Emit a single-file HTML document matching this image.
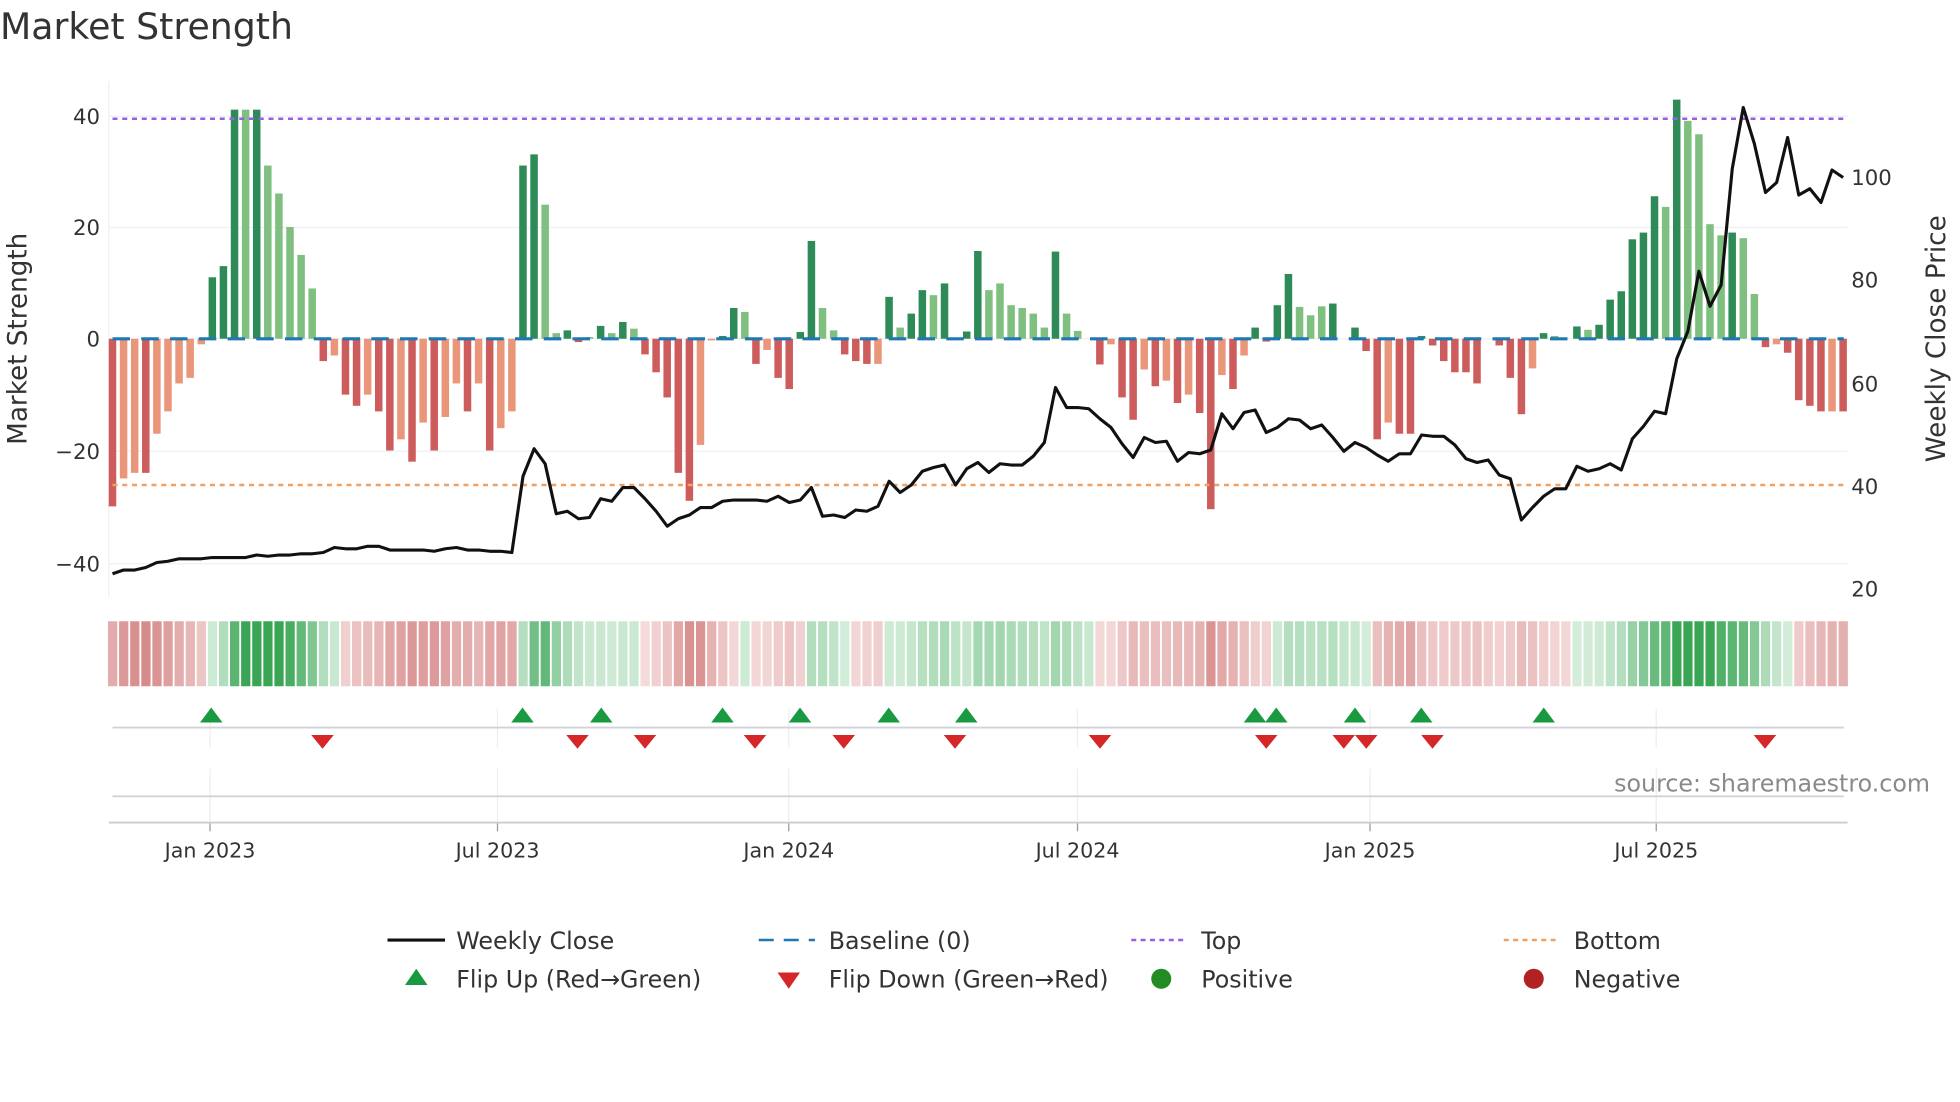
<!DOCTYPE html>
<html><head><meta charset="utf-8"><style>
html,body{margin:0;padding:0;background:#fff;}
svg{display:block;font-family:"DejaVu Sans","Liberation Sans",sans-serif;}
</style></head><body>
<svg id="s" width="1960" height="1102" viewBox="0 0 1568 881.6" xmlns="http://www.w3.org/2000/svg">
<rect width="1568" height="881.6" fill="#fff"/>
<text x="0" y="31" font-size="29" fill="#333">Market Strength</text>
<g id="grid"></g>
<g id="bars"></g>
<g id="over"></g>
<text x="1544" y="633" font-size="19" fill="#8a8a8a" text-anchor="end">source: sharemaestro.com</text>
<g font-size="17" fill="#333" text-anchor="end">
<text x="80" y="99">40</text><text x="80" y="188">20</text><text x="80" y="277">0</text><text x="80" y="367">−20</text><text x="80" y="457">−40</text>
</g>
<g font-size="17" fill="#333">
<text x="1481" y="148">100</text><text x="1481" y="230">80</text><text x="1481" y="313">60</text><text x="1481" y="395">40</text><text x="1481" y="477">20</text>
</g>
<text transform="translate(21,271) rotate(-90)" font-size="21" fill="#333" text-anchor="middle">Market Strength</text>
<text transform="translate(1556,271) rotate(-90)" font-size="21" fill="#333" text-anchor="middle">Weekly Close Price</text>
<g font-size="16.5" fill="#333" text-anchor="middle">
<text x="168" y="686">Jan 2023</text><text x="398" y="686">Jul 2023</text><text x="631" y="686">Jan 2024</text><text x="862" y="686">Jul 2024</text><text x="1096" y="686">Jan 2025</text><text x="1325" y="686">Jul 2025</text>
</g>
<g font-size="19" fill="#333">
<line x1="310" y1="752" x2="356" y2="752" stroke="#111" stroke-width="2.5"/><text x="365" y="759">Weekly Close</text>
<line x1="607" y1="752" x2="652" y2="752" stroke="#1f77b4" stroke-width="2" stroke-dasharray="12,8"/><text x="663" y="759">Baseline (0)</text>
<line x1="905" y1="752" x2="950" y2="752" stroke="#9b5de5" stroke-width="2" stroke-dasharray="4,3.5"/><text x="961" y="759">Top</text>
<line x1="1203" y1="752" x2="1248" y2="752" stroke="#f0a060" stroke-width="2" stroke-dasharray="4,3.5"/><text x="1259" y="759">Bottom</text>
<polygon points="324,788 342,788 333,775" fill="#1a9a40"/><text x="365" y="790">Flip Up (Red→Green)</text>
<polygon points="622,778 640,778 631,791" fill="#d62728"/><text x="663" y="790">Flip Down (Green→Red)</text>
<circle cx="929" cy="783" r="8" fill="#228b22"/><text x="961" y="790">Positive</text>
<circle cx="1227" cy="783" r="8" fill="#b22222"/><text x="1259" y="790">Negative</text>
</g>
</svg>
<script>
var NS="http://www.w3.org/2000/svg";
function el(p,t,a){var e=document.createElementNS(NS,t);for(var k in a)e.setAttribute(k,a[k]);p.appendChild(e);return e;}
var g=document.getElementById('grid'),b=document.getElementById('bars'),o=document.getElementById('over');
[93,182,271,361,451].forEach(function(y){el(g,'line',{x1:87,x2:1478,y1:y,y2:y,stroke:'#eef0f2','stroke-width':1});});
el(g,'line',{x1:87,x2:87,y1:65,y2:478,stroke:'#eef0f2','stroke-width':1});
var ticks=[168,398,631,862,1096,1325];
ticks.forEach(function(x){el(g,'line',{x1:x,x2:x,y1:567,y2:598,stroke:'#eceef0'});el(g,'line',{x1:x,x2:x,y1:615,y2:657,stroke:'#eceef0'});el(g,'line',{x1:x,x2:x,y1:658,y2:665,stroke:'#999'});});
el(g,'line',{x1:90,x2:1475,y1:582,y2:582,stroke:'#d0d3d8','stroke-width':1.5});
el(g,'line',{x1:90,x2:1475,y1:637,y2:637,stroke:'#d0d3d8','stroke-width':1.5});
el(g,'line',{x1:87,x2:1478,y1:658,y2:658,stroke:'#ccc','stroke-width':1.5});
var V=[[-30,1],[-25,0],[-24,0],[-24,1],[-17,0],[-13,0],[-8,0],[-7,0],[-1,0],[11,1],[13,1],[41,1],[41,0],[41,1],[31,0],[26,0],[20,0],[15,0],[9,0],[-4,1],[-3,0],[-10,1],[-12,1],[-10,0],[-13,1],[-20,1],[-18,0],[-22,1],[-15,0],[-20,1],[-14,0],[-8,0],[-13,1],[-8,0],[-20,1],[-16,0],[-13,0],[31,1],[33,1],[24,0],[1,0],[1.5,1],[-0.6,1],[0.3,0],[2.3,1],[1,0],[3,1],[1.8,0],[-2.8,1],[-6,1],[-10.5,1],[-24,1],[-29,1],[-19,0],[-0.3,0],[0.5,1],[5.5,1],[4.8,0],[-4.5,1],[-2,0],[-7,1],[-9,1],[1.2,1],[17.5,1],[5.5,0],[1.5,0],[-2.8,1],[-4,1],[-4.5,1],[-4.5,0],[7.5,1],[2,0],[4.5,1],[8.7,1],[7.8,0],[9.9,1],[0,0],[1.3,1],[15.7,1],[8.7,0],[9.9,0],[6,0],[5.5,0],[4.5,0],[2,0],[15.6,1],[4.5,0],[1.4,0],[0,0],[-4.6,1],[-1,0],[-10.5,1],[-14.5,1],[-5.5,0],[-8.5,1],[-7.5,0],[-11.5,1],[-10,0],[-13.3,1],[-30.5,1],[-6.5,0],[-9,1],[-3,0],[2,1],[-0.5,1],[6,1],[11.6,1],[5.7,0],[4.2,0],[5.8,0],[6.3,1],[0,0],[2,1],[-2.2,1],[-18,1],[-15,0],[-17,1],[-17,1],[0.5,1],[-1.2,1],[-4,1],[-6,1],[-6,1],[-8,1],[0,0],[-1.2,1],[-7,1],[-13.5,1],[-5.3,0],[1,1],[0.5,0],[0,0],[2.2,1],[1.6,0],[2.5,1],[7,1],[8.5,1],[17.8,1],[19,1],[25.5,1],[23.6,0],[42.8,1],[39,0],[36.6,0],[20.5,0],[18.5,0],[19,1],[18,0],[8,0],[-1.5,1],[-1,0],[-2.5,1],[-11,1],[-12,1],[-13,1],[-13,0],[-13,1]];
var P=[459,456,456,454,450,449,447,447,447,446,446,446,446,444,445,444,444,443,443,442,438,439,439,437,437,440,440,440,440,441,439,438,440,440,441,441,442,381,359,371,411,409,415,414,399,401,390,390,399,409,421,415,412,406,406,401,400,400,400,401,397,402,400,390,413,412,414,408,409,405,385,394,388,377,374,372,388,375,370,378,371,372,372,365,354,310,326,326,327,335,342,355,366,350,354,353,369,362,363,360,331,343,330,328,346,342,335,336,343,340,350,361,354,358,364,369,363,363,348,349,349,356,367,370,368,380,383,416,406,397,391,391,373,377,375,371,376,351,341,329,331,287,265,217,245,228,135,86,115,154,146,110,156,151,162,136,142];
var X=function(i){return 90+8.875*i;};
var Y0=271,K=4.47,s=0;
V.forEach(function(v,i){
  var val=v[0],x=X(i)-3,h=Math.abs(val)*K;
  var c=val>=0?(v[1]?'#2e8b57':'#7fbf7f'):(v[1]?'#cd5c5c':'#e9967a');
  if(h>0.3)el(b,'rect',{x:x,y:val>=0?Y0-h:Y0,width:6,height:h,fill:c});
  s=0.55*s+0.45*val;
  var a=Math.min(Math.abs(s)/28,1),col;
  if(s>=0){col='rgb('+Math.round(214-(214-58)*a)+','+Math.round(238-(238-166)*a)+','+Math.round(220-(220-85)*a)+')';}
  else{col='rgb('+Math.round(244-(244-208)*a)+','+Math.round(218-(218-120)*a)+','+Math.round(218-(218-120)*a)+')';}
  el(b,'rect',{x:X(i)-3.6,y:497,width:7.4,height:52,fill:col});
});
el(o,'line',{x1:90,x2:1475,y1:271,y2:271,stroke:'#1f77b4','stroke-width':2.5,'stroke-dasharray':'14,9'});
el(o,'line',{x1:90,x2:1475,y1:95,y2:95,stroke:'#9b5de5','stroke-width':2,'stroke-dasharray':'4,3.8'});
el(o,'line',{x1:90,x2:1475,y1:388,y2:388,stroke:'#f0a060','stroke-width':2,'stroke-dasharray':'4,3.8'});
var pts=P.map(function(y,i){return X(i).toFixed(1)+','+y;}).join(' ');
el(o,'polyline',{points:pts,fill:'none',stroke:'#111','stroke-width':2.5,'stroke-linejoin':'round'});
[169,418,481,578,640,711,773,1004,1021,1084,1137,1235].forEach(function(x){el(o,'polygon',{points:(x-9)+',578 '+(x+9)+',578 '+x+',566',fill:'#1a9a40'});});
[258,462,516,604,675,764,880,1013,1075,1093,1146,1412].forEach(function(x){el(o,'polygon',{points:(x-9)+',588 '+(x+9)+',588 '+x+',599',fill:'#d62728'});});
</script>
</body></html>
